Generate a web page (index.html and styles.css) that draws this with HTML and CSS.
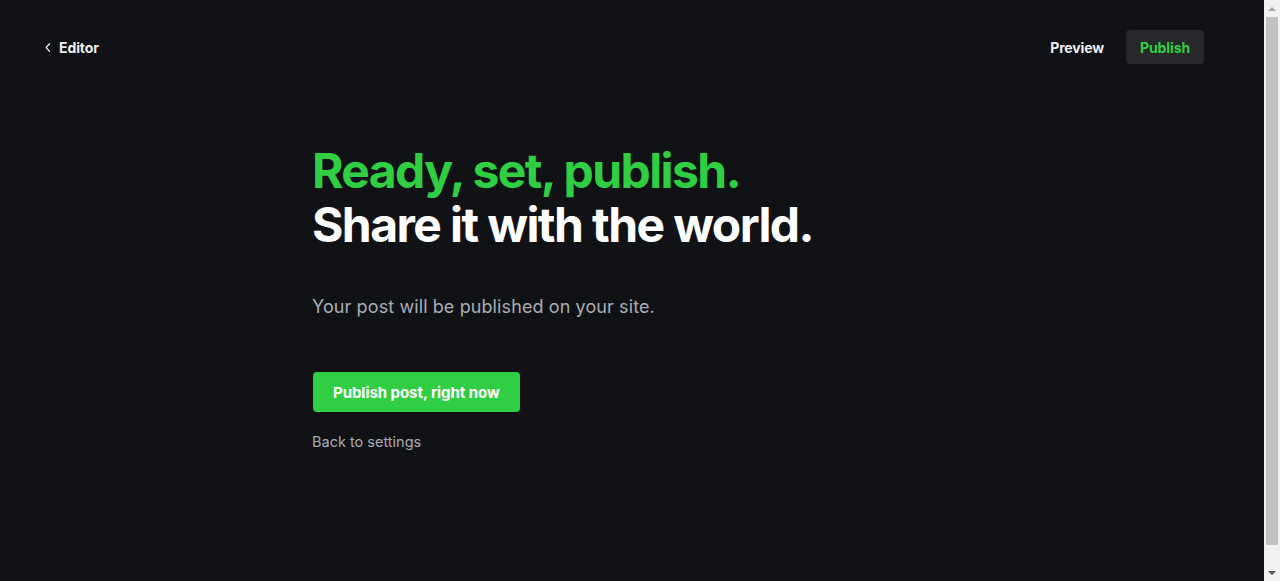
FILE: index.html
```html
<!DOCTYPE html>
<html lang="en">
<head>
<meta charset="utf-8">
<title>Publish</title>
<link rel="stylesheet" href="styles.css">
</head>
<body>
<div class="window">
  <div class="page">
    <header class="topbar">
      <a class="back" href="#">
        <svg class="back-icon" viewBox="0 0 8 12" width="6" height="9" aria-hidden="true"><path d="M6 1 L1.5 6 L6 11" fill="none" stroke="currentColor" stroke-width="1.6" stroke-linecap="round" stroke-linejoin="round"/></svg>
        <span>Editor</span>
      </a>
      <div class="actions">
        <button class="btn-preview" type="button">Preview</button>
        <button class="btn-publish" type="button">Publish</button>
      </div>
    </header>
    <main class="content">
      <h1 class="title">
        <span class="title-green">Ready, set, publish.</span>
        <span class="title-white">Share it with the world.</span>
      </h1>
      <p class="lead">Your post will be published on your site.</p>
      <div class="cta">
        <button class="btn-confirm" type="button">Publish post, right now</button>
        <a class="back-settings" href="#">Back to settings</a>
      </div>
    </main>
  </div>
  <div class="scrollbar" aria-hidden="true">
    <div class="sb-arrow sb-up"></div>
    <div class="sb-track"><div class="sb-thumb"></div></div>
    <div class="sb-arrow sb-down"></div>
  </div>
</div>
</body>
</html>
```
FILE: styles.css
```css
* { box-sizing: border-box; }
html, body { margin: 0; padding: 0; height: 100%; overflow: hidden; }
body {
  background: #111216;
  font-family: Inter, "Noto Sans", sans-serif;
  color: #fff;
}
.window {
  display: flex;
  height: 581px;
}
.page {
  flex: 1;
  display: flex;
  flex-direction: column;
}
.topbar {
  display: flex;
  align-items: center;
  justify-content: space-between;
  padding: 30px 60px 0 45px;
}
.back {
  display: flex;
  align-items: center;
  gap: 8px;
  color: #ebeef0;
  text-decoration: none;
  font-size: 14px;
  font-weight: 700;
  height: 34px;
  letter-spacing: -0.1px;
}
.back-icon { color: #ebeef0; }
.actions {
  display: flex;
  align-items: center;
  gap: 8px;
}
button {
  font-family: inherit;
  border: 0;
  cursor: pointer;
}
.btn-preview {
  background: transparent;
  color: #ebeef0;
  font-size: 14px;
  font-weight: 700;
  height: 34px;
  padding: 0 14px;
  letter-spacing: -0.15px;
}
.btn-publish {
  background: #26282b;
  color: #30cf43;
  font-size: 14px;
  font-weight: 700;
  height: 34px;
  padding: 0 14px;
  border-radius: 4px;
  letter-spacing: -0.1px;
}
.content {
  width: 640px;
  margin: 80px auto 0;
}
.title {
  margin: 0;
  font-size: 48px;
  line-height: 54px;
  font-weight: 700;
  letter-spacing: -0.033em;
  display: flex;
  flex-direction: column;
}
.title-green { color: #30cf43; }
.title-white { color: #fff; }
.lead {
  margin: 41px 0 0;
  font-size: 18px;
  line-height: 28px;
  color: #a8adb3;
  letter-spacing: 0.1px;
}
.cta {
  margin-top: 51px;
  display: flex;
  flex-direction: column;
  align-items: flex-start;
  gap: 21px;
}
.btn-confirm {
  background: #30cf43;
  color: #fff;
  font-size: 15px;
  font-weight: 700;
  height: 40px;
  padding: 0 20px;
  border-radius: 4px;
  margin-left: 1px;
  letter-spacing: -0.05px;
  box-shadow: 0 1px 0 rgba(0,0,0,0.25);
}
.back-settings {
  color: #a8adb3;
  font-size: 14.5px;
  text-decoration: none;
}
.scrollbar {
  width: 16px;
  flex: none;
  background: #f1f1f1;
  display: flex;
  flex-direction: column;
  align-items: center;
}
.sb-arrow {
  height: 17px;
  width: 16px;
  display: flex;
  align-items: center;
  justify-content: center;
}
.sb-up::before, .sb-down::before {
  content: "";
  width: 0;
  height: 0;
  border-left: 4px solid transparent;
  border-right: 4px solid transparent;
}
.sb-up::before { border-bottom: 4px solid #a3a3a3; }
.sb-down::before { border-top: 4px solid #505050; }
.sb-track {
  flex: 1;
  width: 16px;
  padding: 0 2px;
}
.sb-thumb {
  height: 528px;
  background: #c1c1c1;
}
```
